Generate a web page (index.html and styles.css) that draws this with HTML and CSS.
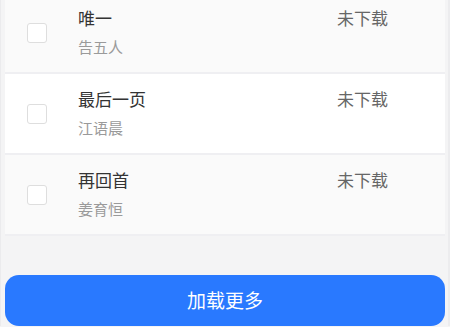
FILE: index.html
```html
<!DOCTYPE html>
<html lang="zh-CN">
<head>
    <meta charset="UTF-8">
    <meta name="viewport" content="width=device-width, initial-scale=1.0">
    <title>歌曲列表</title>
    <link rel="stylesheet" href="styles.css">
</head>
<body>
    <div class="page">
        <ul class="song-list">
            <li class="song-item">
                <span class="check"></span>
                <div class="song-info">
                    <div class="song-name">唯一</div>
                    <div class="song-singer">告五人</div>
                </div>
                <span class="song-status">未下载</span>
            </li>
            <li class="song-item">
                <span class="check"></span>
                <div class="song-info">
                    <div class="song-name">最后一页</div>
                    <div class="song-singer">江语晨</div>
                </div>
                <span class="song-status">未下载</span>
            </li>
            <li class="song-item">
                <span class="check"></span>
                <div class="song-info">
                    <div class="song-name">再回首</div>
                    <div class="song-singer">姜育恒</div>
                </div>
                <span class="song-status">未下载</span>
            </li>
        </ul>

        <button class="btn-more">加载更多</button>
    </div>
</body>
</html>
```

FILE: styles.css
```css
* {
    margin: 0;
    padding: 0;
    box-sizing: border-box;
    font-family: "Noto Sans CJK SC", "Noto Sans", sans-serif;
}

body {
    background: #f4f4f5;
    overflow: hidden;
}

.page {
    padding: 0 3px 0 4px;
    border-right: 2px solid #ececee;
    border-left: 1px solid #ebebed;
    width: 450px;
    min-height: 327px;
}

.song-list {
    list-style: none;
    margin-top: -7px;
}

.song-item {
    display: flex;
    align-items: center;
    height: 81px;
    padding-left: 22px;
    background: #fafafa;
    border-bottom: 2px solid #efeff2;
}

.song-item:nth-child(even) {
    background: #fff;
}

.check {
    width: 20px;
    height: 20px;
    flex-shrink: 0;
    border: 1px solid #dedede;
    border-radius: 3px;
    background: #fff;
}

.song-info {
    flex: 1;
    margin-left: 31px;
    margin-top: -2px;
}

.song-name {
    font-size: 17px;
    line-height: 23px;
    color: #333;
}

.song-singer {
    margin-top: 8px;
    font-size: 15px;
    line-height: 20px;
    color: #9a9a9a;
}

.song-status {
    align-self: flex-start;
    margin-top: 13px;
    margin-right: 57px;
    font-size: 17px;
    line-height: 23px;
    color: #666;
}

.btn-more {
    display: block;
    width: 100%;
    height: 51px;
    margin-top: 39px;
    padding-bottom: 3px;
    border: none;
    border-radius: 14px;
    background: #2979ff;
    color: #fff;
    font-size: 19px;
    cursor: pointer;
}
```
